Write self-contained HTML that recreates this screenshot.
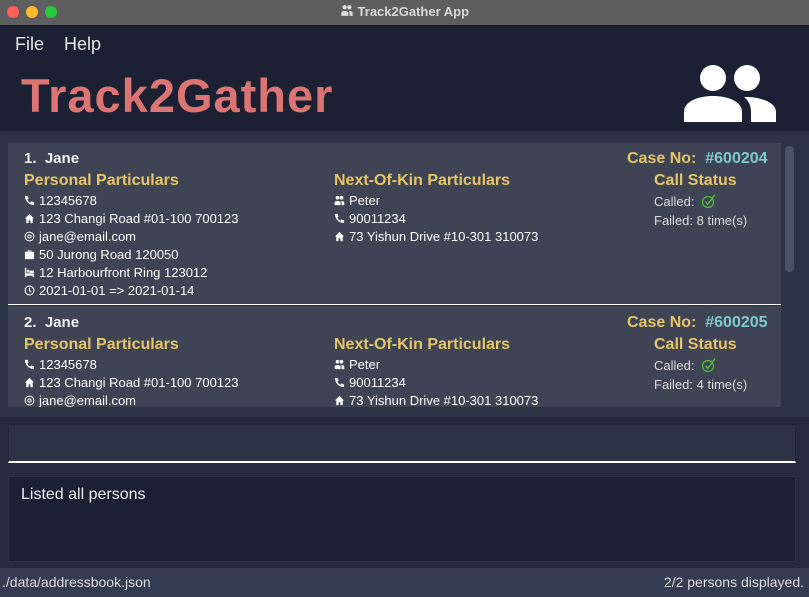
<!DOCTYPE html>
<html><head><meta charset="utf-8"><style>
*{margin:0;padding:0;box-sizing:border-box}
body{width:809px;height:597px;overflow:hidden;background:#1b2032;font-family:"Liberation Sans",sans-serif;position:relative}
.abs{position:absolute}
.tb{left:0;top:0;width:809px;height:26px;background:#5e5e5e;border-bottom:1px solid #1a1a1a}
.dot{width:12px;height:12px;border-radius:50%;top:6px}
.ttl{left:0;width:809px;top:4px;text-align:center;color:#d8d8d8;font-weight:bold;font-size:13px}
.menu{top:34px;color:#e8e8e8;font-size:18px}
.brand{left:21px;top:68px;color:#dc7474;font-size:47px;font-weight:bold;letter-spacing:1px}
.list{left:0;top:131px;width:809px;height:286px;background:#2c3345}
.card{left:8px;width:773px;background:#3e4453;color:#fff;font-size:13px}
.card div{position:absolute;white-space:nowrap}
.y{color:#e6c468;font-weight:bold;font-size:16px}
.name{font-weight:bold;font-size:15px;color:#f0f0f0}
.cy{color:#7ecbc8}
.ic{display:inline-block;width:11px;height:11px;margin-right:4px;vertical-align:-1px}
.st{color:#ddd;font-size:13px}
</style></head><body>
<svg width="0" height="0" style="position:absolute">
<defs>
<symbol id="ph" viewBox="0 0 12 12"><path d="M1 1h3l1 3-1.5 1c.8 1.6 2 2.8 3.5 3.5L8 7l3 1v3C5.5 11 1 6.5 1 1z" fill="#fff"/></symbol>
<symbol id="hm" viewBox="0 0 12 12"><path d="M6 1L1 6h1.5v5h2.5V8h2v3h2.5V6H11z" fill="#fff"/></symbol>
<symbol id="at" viewBox="0 0 12 12"><circle cx="6" cy="6" r="4.8" fill="none" stroke="#fff" stroke-width="1.1"/><circle cx="6" cy="6" r="1.8" fill="none" stroke="#fff" stroke-width="1.1"/></symbol>
<symbol id="wk" viewBox="0 0 12 12"><path d="M4 3V1.5h4V3h3v8H1V3zM5 3h2V2.5H5z" fill="#fff"/></symbol>
<symbol id="bd" viewBox="0 0 12 12"><path d="M1 1h1.5v6H11v4H9.5V9.5h-7V11H1zM3.5 3h2v3h-2zM6 4h5v2.5H6z" fill="#fff"/></symbol>
<symbol id="ck" viewBox="0 0 12 12"><circle cx="6" cy="6" r="4.8" fill="none" stroke="#fff" stroke-width="1.2"/><path d="M6 3v3.3l2 1.4" fill="none" stroke="#fff" stroke-width="1.2"/></symbol>
<symbol id="pp" viewBox="0 0 12 12"><circle cx="3.8" cy="3" r="2" fill="#fff"/><circle cx="8.2" cy="3" r="2" fill="#fff"/><path d="M.8 11V8c0-2 6.4-2 6.4 0v3zM8 6.5c2 0 3.2.7 3.2 1.5v3H8.3V8z" fill="#fff"/></symbol>
<symbol id="ok" viewBox="0 0 16 16"><circle cx="7" cy="9" r="5.5" fill="none" stroke="#4ec23a" stroke-width="1.2"/><path d="M4.5 8.5l2.2 3L14 1.5" fill="none" stroke="#4ec23a" stroke-width="1.4"/></symbol>
</defs></svg>
<div class="abs tb"></div>
<div class="abs dot" style="left:7px;background:#fe5f57"></div>
<div class="abs dot" style="left:26px;background:#febc2e"></div>
<div class="abs dot" style="left:45px;background:#28c840"></div>
<div class="abs ttl"><svg width="14" height="13" style="vertical-align:-1px;opacity:.8"><use href="#pp"/></svg> Track2Gather App</div>
<div class="abs menu" style="left:15px">File</div>
<div class="abs menu" style="left:64px">Help</div>
<div class="abs brand">Track2Gather</div>
<svg class="abs" style="left:683px;top:61px" width="95" height="62" viewBox="0 0 95 62">
<circle cx="30" cy="17" r="13" fill="#fff"/><circle cx="64" cy="17" r="13" fill="#fff"/>
<path d="M1 61V51C1 40 16 35 30 35C44 35 59 40 59 51V61Z" fill="#fff"/>
<path d="M66 36C80 37 93 42 93 51V61H68V51C68 44 65 39 61 36Z" fill="#fff"/>
</svg>
<div class="abs list"></div>
<div class="abs" style="left:785px;top:146px;width:9px;height:126px;background:#4a526a;border-radius:4px"></div>

<div class="abs card" style="top:143px;height:161px">
<div class="name" style="left:16px;top:7px">1.&nbsp; Jane</div>
<div class="y" style="left:619px;top:7px">Case No:&nbsp; <span class="cy">#600204</span></div>
<div class="y" style="left:16px;top:29px">Personal Particulars</div>
<div class="y" style="left:326px;top:29px">Next-Of-Kin Particulars</div>
<div class="y" style="left:646px;top:29px">Call Status</div>
<div style="left:16px;top:50px"><svg class="ic"><use href="#ph"/></svg>12345678</div>
<div style="left:16px;top:68px"><svg class="ic"><use href="#hm"/></svg>123 Changi Road #01-100 700123</div>
<div style="left:16px;top:86px"><svg class="ic"><use href="#at"/></svg>jane@email.com</div>
<div style="left:16px;top:104px"><svg class="ic"><use href="#wk"/></svg>50 Jurong Road 120050</div>
<div style="left:16px;top:122px"><svg class="ic"><use href="#bd"/></svg>12 Harbourfront Ring 123012</div>
<div style="left:16px;top:140px"><svg class="ic"><use href="#ck"/></svg>2021-01-01 =&gt; 2021-01-14</div>
<div style="left:326px;top:50px"><svg class="ic"><use href="#pp"/></svg>Peter</div>
<div style="left:326px;top:68px"><svg class="ic"><use href="#ph"/></svg>90011234</div>
<div style="left:326px;top:86px"><svg class="ic"><use href="#hm"/></svg>73 Yishun Drive #10-301 310073</div>
<div class="st" style="left:646px;top:50px">Called: <svg width="16" height="16" style="vertical-align:-3px;margin-left:3px"><use href="#ok"/></svg></div>
<div class="st" style="left:646px;top:70px">Failed: 8 time(s)</div>
</div>
<div class="abs" style="left:8px;top:304px;width:773px;height:1px;background:#fff"></div>
<div class="abs card" style="top:306px;height:101px;overflow:hidden">
<div class="name" style="left:16px;top:8px">2.&nbsp; Jane</div>
<div class="y" style="left:619px;top:8px">Case No:&nbsp; <span class="cy">#600205</span></div>
<div class="y" style="left:16px;top:30px">Personal Particulars</div>
<div class="y" style="left:326px;top:30px">Next-Of-Kin Particulars</div>
<div class="y" style="left:646px;top:30px">Call Status</div>
<div style="left:16px;top:51px"><svg class="ic"><use href="#ph"/></svg>12345678</div>
<div style="left:16px;top:69px"><svg class="ic"><use href="#hm"/></svg>123 Changi Road #01-100 700123</div>
<div style="left:16px;top:87px"><svg class="ic"><use href="#at"/></svg>jane@email.com</div>
<div style="left:326px;top:51px"><svg class="ic"><use href="#pp"/></svg>Peter</div>
<div style="left:326px;top:69px"><svg class="ic"><use href="#ph"/></svg>90011234</div>
<div style="left:326px;top:87px"><svg class="ic"><use href="#hm"/></svg>73 Yishun Drive #10-301 310073</div>
<div class="st" style="left:646px;top:51px">Called: <svg width="16" height="16" style="vertical-align:-3px;margin-left:3px"><use href="#ok"/></svg></div>
<div class="st" style="left:646px;top:71px">Failed: 4 time(s)</div>
</div>

<div class="abs" style="left:0;top:417px;width:809px;height:52px;background:#252b3c"></div>
<div class="abs" style="left:8px;top:424px;width:788px;height:39px;background:#2c3345;border:1px solid #1f2535;border-bottom:2px solid #fff"></div>
<div class="abs" style="left:0;top:469px;width:809px;height:99px;background:#252b3c"></div>
<div class="abs" style="left:8px;top:476px;width:788px;height:86px;background:#1b2032;border:1px solid #2c3345"></div>
<div class="abs" style="left:21px;top:486px;color:#eee;font-size:16px">Listed all persons</div>
<div class="abs" style="left:0;top:568px;width:809px;height:29px;background:#343b52"></div>
<div class="abs" style="left:2px;top:574px;color:#ddd;font-size:14px">./data/addressbook.json</div>
<div class="abs" style="right:5px;top:574px;color:#ddd;font-size:14px">2/2 persons displayed.</div>
</body></html>
